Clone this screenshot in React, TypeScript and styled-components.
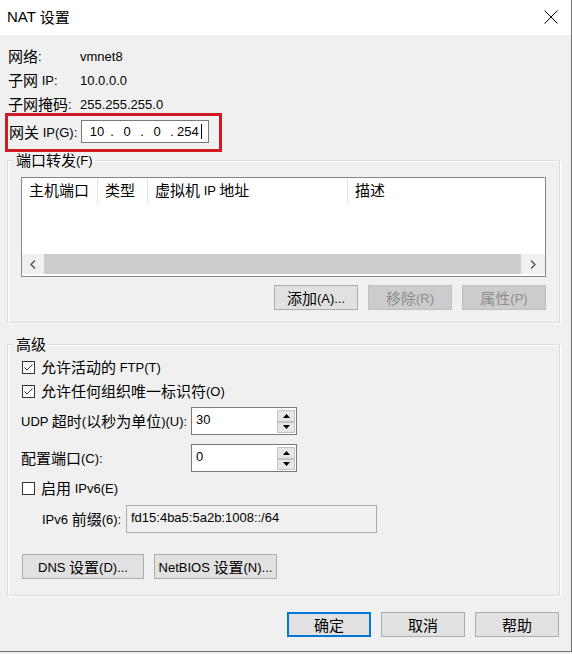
import styled, { createGlobalStyle } from "styled-components";

const GlobalStyle = createGlobalStyle`
  html, body {
    margin: 0;
    padding: 0;
    background: #f0f0f0;
  }
  body {
    font-family: "Liberation Sans", "Noto Sans CJK SC", sans-serif;
    font-size: 13px;
    color: #000;
  }
`;

// Chinese glyphs in the dialog are drawn a bit larger than the Latin text
const Han = styled.span`
  font-family: "Noto Sans CJK SC", sans-serif;
  font-size: 15px;
  line-height: 1;
  vertical-align: -1px;
`;

const Text = styled.span`
  white-space: pre;
`;

const T = ({ children }: { children: string }) => (
  <Text>
    {children
      .split(/([\u3400-\u9fff]+)/)
      .map((part, i) => (i % 2 ? <Han key={i}>{part}</Han> : part))}
  </Text>
);

const Window = styled.div`
  box-sizing: border-box;
  width: 572px;
  height: 652px;
  display: flex;
  flex-direction: column;
  background: #f0f0f0;
  border-right: 1px solid #707070;
  border-bottom: 1px solid #707070;
`;

const TitleBar = styled.div`
  flex: none;
  height: 35px;
  display: flex;
  align-items: center;
  justify-content: space-between;
  padding: 0 13px 0 7px;
  background: #fff;
`;

const Title = styled.div`
  font-size: 15px;
  line-height: 20px;
  margin-top: -1px;
`;

const CloseButton = styled.div`
  display: flex;
  width: 14px;
  height: 14px;
  margin-top: -2px;
`;

const Body = styled.div`
  flex: 1;
  display: flex;
  flex-direction: column;
  padding: 9px 11px 0 7px;
`;

const InfoGrid = styled.div`
  display: grid;
  grid-template-columns: 72px auto;
  grid-auto-rows: 24px;
  align-items: center;
  padding-left: 1px;
`;

const GatewayBox = styled.div`
  align-self: flex-start;
  display: flex;
  align-items: center;
  margin: -3px 0 0 -2px;
  padding: 4px 10px 6px 1px;
  border: 3px solid #cf1b24;
`;

const GatewayLabel = styled.span`
  width: 72px;
  white-space: nowrap;
`;

const IpField = styled.div`
  box-sizing: border-box;
  width: 128px;
  height: 23px;
  display: flex;
  align-items: center;
  padding-left: 5px;
  background: #fff;
  border: 1px solid #7a7a7a;
`;

const IpPart = styled.span<{ $last?: boolean }>`
  width: ${(p) => (p.$last ? "auto" : "20px")};
  text-align: ${(p) => (p.$last ? "left" : "center")};
`;

const IpDot = styled.span`
  width: 10px;
  text-align: center;
`;

const Caret = styled.span`
  width: 1px;
  height: 15px;
  margin-left: 2px;
  background: #000;
`;

const Group = styled.fieldset<{ $gap?: number }>`
  margin: ${(p) => p.$gap ?? 0}px 0 0 0;
  padding: 0;
  min-width: 0;
  border: 1px solid #dcdcdc;
  box-shadow: inset 1px 1px 0 #fff, 1px 1px 0 #fff;
`;

const GroupLegend = styled.legend`
  margin-left: 6px;
  padding: 0 2px;
  height: 16px;
  line-height: 16px;
`;

const ForwardContent = styled.div`
  display: flex;
  flex-direction: column;
  padding: 9px 13px 12px 13px;
`;

const ListBox = styled.div`
  box-sizing: border-box;
  height: 100px;
  display: flex;
  flex-direction: column;
  background: #fff;
  border: 1px solid #828790;
`;

const ListHeader = styled.div`
  display: flex;
  height: 26px;
`;

const HeaderCell = styled.div<{ $width?: number }>`
  box-sizing: border-box;
  ${(p) => (p.$width ? `width: ${p.$width}px;` : "flex: 1;")}
  padding-left: 7px;
  line-height: 26px;
  white-space: nowrap;
  border-right: ${(p) => (p.$width ? "1px solid #e5e5e5" : "none")};
`;

const ScrollBar = styled.div`
  display: flex;
  height: 20px;
  margin-top: auto;
  margin-bottom: 2px;
`;

const ScrollArrow = styled.div<{ $width: number }>`
  width: ${(p) => p.$width}px;
  display: flex;
  align-items: center;
  justify-content: center;
  background: #f0f0f0;
`;

const ScrollTrack = styled.div`
  flex: 1;
  background: #cdcdcd;
`;

const ButtonRow = styled.div<{ $gap?: number; $start?: boolean }>`
  display: flex;
  justify-content: ${(p) => (p.$start ? "flex-start" : "flex-end")};
  gap: 10px;
  margin-top: ${(p) => p.$gap ?? 8}px;
`;

const Button = styled.div<{ $width?: number; $disabled?: boolean; $primary?: boolean }>`
  box-sizing: border-box;
  width: ${(p) => p.$width ?? 84}px;
  height: 25px;
  display: flex;
  align-items: center;
  justify-content: center;
  white-space: nowrap;
  background: ${(p) => (p.$disabled ? "#cccccc" : "#e1e1e1")};
  color: ${(p) => (p.$disabled ? "#8e8e8e" : "#000")};
  border: ${(p) =>
    p.$primary ? "2px solid #0078d7" : p.$disabled ? "1px solid #bfbfbf" : "1px solid #adadad"};
`;

const AdvancedContent = styled.div`
  display: flex;
  flex-direction: column;
  padding: 3px 14px 16px 14px;
`;

const CheckRow = styled.div<{ $gap?: number }>`
  display: flex;
  align-items: center;
  gap: 6px;
  height: 24px;
  margin-top: ${(p) => p.$gap ?? 0}px;
`;

const CheckBox = styled.div`
  box-sizing: border-box;
  width: 13px;
  height: 13px;
  display: flex;
  background: #fff;
  border: 1px solid #333;
`;

const FieldRow = styled.div<{ $gap: number; $indent?: number }>`
  display: flex;
  align-items: center;
  margin-top: ${(p) => p.$gap}px;
  padding-left: ${(p) => p.$indent ?? 0}px;
`;

const FieldLabel = styled.span<{ $width: number }>`
  width: ${(p) => p.$width}px;
  margin-left: -1px;
  white-space: nowrap;
`;

const Spinner = styled.div`
  box-sizing: border-box;
  width: 106px;
  height: 28px;
  display: flex;
  background: #fff;
  border: 1px solid #7a7a7a;
`;

const SpinText = styled.div`
  flex: 1;
  padding: 4px 0 0 4px;
  line-height: 16px;
`;

const SpinButtons = styled.div`
  width: 18px;
  display: flex;
  flex-direction: column;
  margin: 2px 1px 1px 0;
`;

const SpinButton = styled.div`
  flex: 1;
  display: flex;
  align-items: center;
  justify-content: center;
  background: #e6e6e6;
  border: 1px solid #c4c4c4;
`;

const PrefixField = styled.div`
  box-sizing: border-box;
  width: 251px;
  height: 28px;
  padding: 4px 0 0 4px;
  line-height: 16px;
  background: #f0f0f0;
  border: 1px solid #adadad;
`;

const Footer = styled.div`
  display: flex;
  justify-content: flex-end;
  gap: 10px;
  margin-top: 16px;
  padding-right: 1px;
`;

const Check = ({ checked }: { checked?: boolean }) => (
  <CheckBox>
    {checked && (
      <svg width="11" height="11" viewBox="0 0 11 11">
        <polyline points="1.5,5.5 4,8 9.5,2.5" fill="none" stroke="#333" strokeWidth="1" />
      </svg>
    )}
  </CheckBox>
);

const Chevron = ({ dir }: { dir: "left" | "right" }) => (
  <svg width="6" height="9" viewBox="0 0 6 9">
    <polyline
      points={dir === "left" ? "5,0.5 1,4.5 5,8.5" : "1,0.5 5,4.5 1,8.5"}
      fill="none"
      stroke="#555"
      strokeWidth="1.4"
    />
  </svg>
);

const Triangle = ({ up }: { up?: boolean }) => (
  <svg width="7" height="4" viewBox="0 0 7 4">
    <polygon points={up ? "3.5,0 7,4 0,4" : "0,0 7,0 3.5,4"} fill="#000" />
  </svg>
);

const SpinBox = ({ value }: { value: string }) => (
  <Spinner>
    <SpinText>{value}</SpinText>
    <SpinButtons>
      <SpinButton>
        <Triangle up />
      </SpinButton>
      <SpinButton>
        <Triangle />
      </SpinButton>
    </SpinButtons>
  </Spinner>
);

const App = () => {
  return (
    <>
      <GlobalStyle />
      <Window>
        <TitleBar>
          <Title>
            <T>NAT 设置</T>
          </Title>
          <CloseButton>
            <svg width="14" height="14" viewBox="0 0 14 14">
              <path d="M0.5 0.5 L13.5 13.5 M13.5 0.5 L0.5 13.5" stroke="#000" strokeWidth="1" />
            </svg>
          </CloseButton>
        </TitleBar>
        <Body>
          <InfoGrid>
            <T>网络:</T>
            <span>vmnet8</span>
            <T>子网 IP:</T>
            <span>10.0.0.0</span>
            <T>子网掩码:</T>
            <span>255.255.255.0</span>
          </InfoGrid>
          <GatewayBox>
            <GatewayLabel>
              <T>网关 IP(G):</T>
            </GatewayLabel>
            <IpField>
              <IpPart>10</IpPart>
              <IpDot>.</IpDot>
              <IpPart>0</IpPart>
              <IpDot>.</IpDot>
              <IpPart>0</IpPart>
              <IpDot>.</IpDot>
              <IpPart $last>254</IpPart>
              <Caret />
            </IpField>
          </GatewayBox>

          <Group>
            <GroupLegend>
              <T>端口转发(F)</T>
            </GroupLegend>
            <ForwardContent>
              <ListBox>
                <ListHeader>
                  <HeaderCell $width={76}>
                    <T>主机端口</T>
                  </HeaderCell>
                  <HeaderCell $width={50}>
                    <T>类型</T>
                  </HeaderCell>
                  <HeaderCell $width={200}>
                    <T>虚拟机 IP 地址</T>
                  </HeaderCell>
                  <HeaderCell>
                    <T>描述</T>
                  </HeaderCell>
                </ListHeader>
                <ScrollBar>
                  <ScrollArrow $width={22}>
                    <Chevron dir="left" />
                  </ScrollArrow>
                  <ScrollTrack />
                  <ScrollArrow $width={24}>
                    <Chevron dir="right" />
                  </ScrollArrow>
                </ScrollBar>
              </ListBox>
              <ButtonRow>
                <Button>
                  <T>添加(A)...</T>
                </Button>
                <Button $disabled>
                  <T>移除(R)</T>
                </Button>
                <Button $disabled>
                  <T>属性(P)</T>
                </Button>
              </ButtonRow>
            </ForwardContent>
          </Group>

          <Group $gap={13}>
            <GroupLegend>
              <T>高级</T>
            </GroupLegend>
            <AdvancedContent>
              <CheckRow>
                <Check checked />
                <T>允许活动的 FTP(T)</T>
              </CheckRow>
              <CheckRow>
                <Check checked />
                <T>允许任何组织唯一标识符(O)</T>
              </CheckRow>
              <FieldRow $gap={4}>
                <FieldLabel $width={170}>
                  <T>UDP 超时(以秒为单位)(U):</T>
                </FieldLabel>
                <SpinBox value="30" />
              </FieldRow>
              <FieldRow $gap={9}>
                <FieldLabel $width={170}>
                  <T>配置端口(C):</T>
                </FieldLabel>
                <SpinBox value="0" />
              </FieldRow>
              <CheckRow $gap={4}>
                <Check />
                <T>启用 IPv6(E)</T>
              </CheckRow>
              <FieldRow $gap={5} $indent={21}>
                <FieldLabel $width={84}>
                  <T>IPv6 前缀(6):</T>
                </FieldLabel>
                <PrefixField>fd15:4ba5:5a2b:1008::/64</PrefixField>
              </FieldRow>
              <ButtonRow $gap={21} $start>
                <Button $width={122}>
                  <T>DNS 设置(D)...</T>
                </Button>
                <Button $width={123}>
                  <T>NetBIOS 设置(N)...</T>
                </Button>
              </ButtonRow>
            </AdvancedContent>
          </Group>

          <Footer>
            <Button $primary>
              <T>确定</T>
            </Button>
            <Button>
              <T>取消</T>
            </Button>
            <Button>
              <T>帮助</T>
            </Button>
          </Footer>
        </Body>
      </Window>
    </>
  );
};

export default App;
